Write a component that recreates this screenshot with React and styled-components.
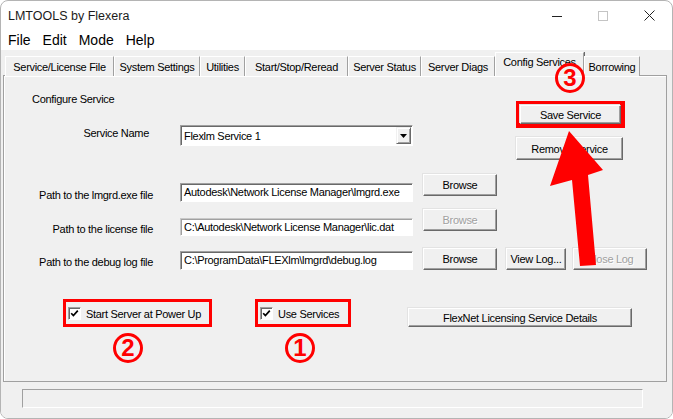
import React from 'react';
import styled, { createGlobalStyle } from 'styled-components';

const Global = createGlobalStyle`
  html, body { margin: 0; padding: 0; background: #ffffff; }
  body { width: 673px; height: 419px; overflow: hidden; font-family: "Liberation Sans", Arial, sans-serif; }
  * { box-sizing: border-box; }
`;

const Window = styled.div`
  position: relative;
  width: 673px;
  height: 419px;
  border: 1px solid #b4b4b4;
  border-radius: 8px;
  overflow: hidden;
  display: flex;
  flex-direction: column;
  background: #ffffff;
`;

const TitleBar = styled.div`
  height: 29px;
  display: flex;
  align-items: center;
  padding-left: 7px;
  flex: none;
`;

const Title = styled.div`
  font-size: 12.5px;
  color: #1b1b1b;
`;

const Controls = styled.div`
  margin-left: auto;
  display: flex;
  height: 100%;
`;

const ControlButton = styled.div`
  width: 46px;
  height: 100%;
  display: flex;
  align-items: center;
  justify-content: center;
`;

const MenuBar = styled.div`
  height: 20px;
  display: flex;
  align-items: center;
  padding-left: 7px;
  gap: 12px;
  font-size: 14px;
  color: #000;
  flex: none;
`;

const MenuItem = styled.span`
  line-height: 20px;
`;

const Body = styled.div`
  flex: 1;
  background: #f0f0f0;
  padding: 2px 5px 0 2px;
  display: flex;
  flex-direction: column;
`;

const TabStrip = styled.div`
  height: 24px;
  display: flex;
  align-items: flex-end;
  padding-left: 2px;
  position: relative;
  z-index: 1;
  flex: none;
`;

const Tab = styled.div`
  width: ${p => p.$w}px;
  height: ${p => (p.$active ? 24 : 20)}px;
  padding-top: ${p => (p.$active ? 3 : 0)}px;
  display: flex;
  justify-content: center;
  align-items: ${p => (p.$active ? 'flex-start' : 'center')};
  font-size: 11px;
  letter-spacing: -0.3px;
  color: #000;
  white-space: nowrap;
  background: #f0f0f0;
  border-top: 1px solid #ffffff;
  border-left: 1px solid #ffffff;
  border-right: 1px solid #a0a0a0;
  box-shadow: ${p => (p.$active ? '1px 0 0 #696969' : 'none')};
  flex: none;
`;

const Panel = styled.div`
  margin-top: -1px;
  height: 307px;
  border: 1px solid #a0a0a0;
  box-shadow: inset 1px 1px 0 #ffffff;
  display: flex;
  flex-direction: column;
  flex: none;
  font-size: 11px;
  letter-spacing: -0.3px;
  color: #000;
`;

const StatusBar = styled.div`
  margin: 7px 0 0 19px;
  width: 621px;
  height: 19px;
  border: 1px solid;
  border-color: #a0a0a0 #ffffff #ffffff #a0a0a0;
  flex: none;
`;

const TopSection = styled.div`
  height: 98px;
  display: flex;
  flex: none;
`;

const ConfigCol = styled.div`
  width: 512px;
  padding-left: 28px;
  display: flex;
  flex-direction: column;
`;

const SectionTitle = styled.div`
  margin-top: 17px;
  line-height: 13px;
`;

const ServiceRow = styled.div`
  margin: 19px 0 0 -28px;
  display: flex;
  align-items: flex-start;
  gap: 31px;
`;

const FieldLabel = styled.div`
  width: ${p => p.$w}px;
  margin-top: ${p => p.$top}px;
  line-height: 13px;
  text-align: right;
  white-space: nowrap;
`;

const Sunken = styled.div`
  background: #ffffff;
  border: 1px solid;
  border-color: ${p => (p.$disabled ? '#c8c8c8 #ffffff #ffffff #c8c8c8' : '#a0a0a0 #ffffff #ffffff #a0a0a0')};
  box-shadow: inset 1px 1px 0 ${p => (p.$disabled ? '#a0a0a0' : '#696969')};
`;

const Combo = styled(Sunken)`
  width: 233px;
  height: 21px;
  display: flex;
  align-items: center;
  padding: 0 1px 0 3px;
`;

const ComboArrow = styled.div`
  margin-left: auto;
  width: 15px;
  height: 17px;
  background: #f0f0f0;
  border: 1px solid;
  border-color: #f0f0f0 #696969 #696969 #f0f0f0;
  box-shadow: inset 1px 1px 0 #ffffff, inset -1px -1px 0 #a0a0a0;
  display: flex;
  align-items: center;
  justify-content: center;
`;

const TextBox = styled(Sunken)`
  width: 233px;
  height: ${p => p.$h}px;
  margin-top: ${p => p.$top}px;
  padding-left: 3px;
  line-height: ${p => p.$h - 2}px;
  white-space: nowrap;
  overflow: hidden;
`;

const Button = styled.button`
  width: ${p => p.$w}px;
  height: ${p => p.$h}px;
  margin: ${p => p.$mt || 0}px 0 0 0;
  padding: 0;
  font: 11px "Liberation Sans", Arial, sans-serif;
  letter-spacing: -0.3px;
  white-space: nowrap;
  color: ${p => (p.disabled ? '#a0a0a0' : '#000000')};
  text-shadow: ${p => (p.disabled ? '1px 1px 0 #ffffff' : 'none')};
  background: #f0f0f0;
  border: 1px solid;
  border-color: #ffffff #696969 #696969 #ffffff;
  box-shadow: inset -1px -1px 0 #a0a0a0, -1px -1px 0 #e3e3e3;
`;

const ServiceButtons = styled.div`
  padding-top: 25px;
  display: flex;
  flex-direction: column;
  align-items: flex-start;
  gap: 9px;
`;

const Highlight = styled.div`
  width: ${p => p.$w}px;
  height: ${p => p.$h}px;
  border: ${p => p.$thick}px solid #ff0000;
  display: flex;
  align-items: center;
  flex: none;
`;

const PathGrid = styled.div`
  display: grid;
  grid-template-columns: 176px 243px 83px 67px 74px;
  grid-template-rows: 35px 39px 22px;
  align-items: start;
  flex: none;
`;

const OptionsRow = styled.div`
  margin-top: 29px;
  padding-left: 59px;
  display: flex;
  align-items: flex-start;
  flex: none;
`;

const CheckOption = styled.label`
  display: flex;
  align-items: center;
  gap: 5px;
  padding: 1px 0 0 2px;
  white-space: nowrap;
`;

const CheckBox = styled.span`
  width: 13px;
  height: 13px;
  background: #ffffff;
  border: 1px solid;
  border-color: #a0a0a0 #ffffff #ffffff #a0a0a0;
  box-shadow: inset 1px 1px 0 #696969;
  display: inline-flex;
  align-items: center;
  justify-content: center;
  flex: none;
`;

const Spacer = styled.div`
  width: ${p => p.$w}px;
  flex: none;
`;

const Overlay = styled.div`
  position: absolute;
  left: -1px;
  top: -1px;
  width: 673px;
  height: 419px;
  pointer-events: none;
  z-index: 5;
`;

const Callout = styled.div`
  position: absolute;
  left: ${p => p.$x}px;
  top: ${p => p.$y}px;
  width: 30px;
  height: 30px;
  border: 3px solid #ff0000;
  border-radius: 50%;
  color: #ff0000;
  font: bold 24px/24px "Liberation Sans", Arial, sans-serif;
  display: flex;
  align-items: center;
  justify-content: center;
  letter-spacing: 0;
`;

const ArrowSvg = styled.svg`
  position: absolute;
  left: 0;
  top: 0;
`;

const Check = () => (
  <svg width="9" height="9" viewBox="0 0 9 9">
    <path d="M1.2 4.2 L3.4 6.6 L7.8 1.6" fill="none" stroke="#000" strokeWidth="1.7" />
  </svg>
);

const tabs = [
  ['Service/License File', 109],
  ['System Settings', 86],
  ['Utilities', 45],
  ['Start/Stop/Reread', 103],
  ['Server Status', 73],
  ['Server Diags', 74],
  ['Config Services', 89],
  ['Borrowing', 56],
];

export default function App() {
  return (
    <>
      <Global />
      <Window>
        <TitleBar>
          <Title>LMTOOLS by Flexera</Title>
          <Controls>
            <ControlButton>
              <svg width="10" height="10" viewBox="0 0 10 10">
                <path d="M0 5.5 H10" stroke="#222" strokeWidth="1" />
              </svg>
            </ControlButton>
            <ControlButton>
              <svg width="10" height="10" viewBox="0 0 10 10">
                <rect x="0.5" y="0.5" width="9" height="9" fill="none" stroke="#c4c4c4" strokeWidth="1" />
              </svg>
            </ControlButton>
            <ControlButton>
              <svg width="11" height="11" viewBox="0 0 11 11">
                <path d="M0.5 0.5 L10.5 10.5 M10.5 0.5 L0.5 10.5" stroke="#222" strokeWidth="1" />
              </svg>
            </ControlButton>
          </Controls>
        </TitleBar>
        <MenuBar>
          <MenuItem>File</MenuItem>
          <MenuItem>Edit</MenuItem>
          <MenuItem>Mode</MenuItem>
          <MenuItem>Help</MenuItem>
        </MenuBar>
        <Body>
          <TabStrip>
            {tabs.map(([t, w]) => (
              <Tab key={t} $w={w} $active={t === 'Config Services'}>{t}</Tab>
            ))}
          </TabStrip>
          <Panel>
            <TopSection>
              <ConfigCol>
                <SectionTitle>Configure Service</SectionTitle>
                <ServiceRow>
                  <FieldLabel $w={145} $top={2}>Service Name</FieldLabel>
                  <Combo>
                    <span>Flexlm Service 1</span>
                    <ComboArrow>
                      <svg width="7" height="4" viewBox="0 0 7 4">
                        <path d="M0 0 H7 L3.5 4 Z" fill="#000" />
                      </svg>
                    </ComboArrow>
                  </Combo>
                </ServiceRow>
              </ConfigCol>
              <ServiceButtons>
                <Highlight $w={109} $h={27} $thick={4}>
                  <Button $w={101} $h={19}>Save Service</Button>
                </Highlight>
                <Button $w={107} $h={23}>Remove Service</Button>
              </ServiceButtons>
            </TopSection>
            <PathGrid>
              <FieldLabel $w={149} $top={15}>Path to the lmgrd.exe file</FieldLabel>
              <TextBox $h={19} $top={9}>Autodesk\Network License Manager\lmgrd.exe</TextBox>
              <Button $w={74} $h={22}>Browse</Button>
              <span />
              <span />

              <FieldLabel $w={149} $top={14}>Path to the license file</FieldLabel>
              <TextBox $h={18} $top={9} $disabled>C:\Autodesk\Network License Manager\lic.dat</TextBox>
              <Button $w={74} $h={22} disabled>Browse</Button>
              <span />
              <span />

              <FieldLabel $w={149} $top={8}>Path to the debug log file</FieldLabel>
              <TextBox $h={19} $top={3}>C:\ProgramData\FLEXlm\lmgrd\debug.log</TextBox>
              <Button $w={74} $h={22}>Browse</Button>
              <Button $w={60} $h={22}>View Log...</Button>
              <Button $w={74} $h={22} disabled>Close Log</Button>
            </PathGrid>
            <OptionsRow>
              <Highlight $w={149} $h={28} $thick={3}>
                <CheckOption>
                  <CheckBox><Check /></CheckBox>
                  Start Server at Power Up
                </CheckOption>
              </Highlight>
              <Spacer $w={43} />
              <Highlight $w={96} $h={28} $thick={3}>
                <CheckOption>
                  <CheckBox><Check /></CheckBox>
                  Use Services
                </CheckOption>
              </Highlight>
              <Spacer $w={57} />
              <Button $w={224} $h={19} $mt={9}>FlexNet Licensing Service Details</Button>
            </OptionsRow>
          </Panel>
          <StatusBar />
        </Body>
        <Overlay>
          <Callout $x={555} $y={63}>3</Callout>
          <Callout $x={113} $y={333}>2</Callout>
          <Callout $x={285} $y={333}>1</Callout>
          <ArrowSvg width="673" height="419" viewBox="0 0 673 419">
            <polygon
              points="569,131 603,170 588,175 596,265 580,266 572,180 550,186"
              fill="#ff0000"
            />
          </ArrowSvg>
        </Overlay>
      </Window>
    </>
  );
}
